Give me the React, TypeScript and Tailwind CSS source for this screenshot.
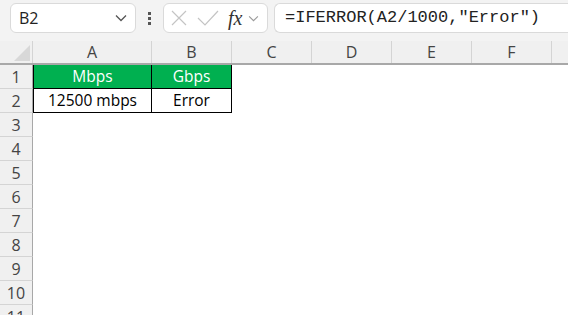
import React from "react";

const cols = [
  { name: "A", w: "w-[119px]" },
  { name: "B", w: "w-[80px]" },
  { name: "C", w: "w-[80px]" },
  { name: "D", w: "w-[80px]" },
  { name: "E", w: "w-[80px]" },
  { name: "F", w: "w-[80px]" },
  { name: "", w: "w-[80px]" },
];

const rows = [1, 2, 3, 4, 5, 6, 7, 8, 9, 10, 11];

function Chevron() {
  return (
    <svg width="12" height="8" viewBox="0 0 12 8" fill="none">
      <path d="M1 1.5 6 6.5 11 1.5" stroke="#555" strokeWidth="1.3" />
    </svg>
  );
}

export default function App() {
  return (
    <div
      className="flex h-[315px] w-[568px] flex-col overflow-hidden bg-[#f3f3f3]"
      style={{ fontFamily: "'Open Sans', 'Liberation Sans', sans-serif" }}
    >
      {/* formula bar */}
      <div className="flex h-[41px] shrink-0 items-start pt-[3px]">
        <div className="ml-[10px] flex h-[30px] w-[126px] items-center justify-between rounded-[6px] border border-[#dadada] bg-white pl-[8px] pr-[8px]">
          <span className="text-[16px] text-[#222]">B2</span>
          <Chevron />
        </div>
        <div className="flex h-[30px] w-[27px] flex-col items-center justify-center gap-[2px]">
          <span className="h-[3px] w-[3px] bg-[#555]" />
          <span className="h-[3px] w-[3px] bg-[#555]" />
          <span className="h-[3px] w-[3px] bg-[#555]" />
        </div>
        <div className="flex h-[30px] w-[105px] items-center rounded-[6px] border border-[#dadada] bg-white pl-[7px]">
          <svg width="16" height="16" viewBox="0 0 16 16" fill="none">
            <path d="M1 1 15 15M15 1 1 15" stroke="#c4c4c4" strokeWidth="1.2" />
          </svg>
          <svg className="ml-[10px]" width="22" height="16" viewBox="0 0 22 16" fill="none">
            <path d="M1 8 8 15 21 1" stroke="#c4c4c4" strokeWidth="1.2" />
          </svg>
          <span
            className="ml-[9px] text-[20px] italic leading-none text-[#333]"
            style={{ fontFamily: "'Liberation Serif', serif" }}
          >
            fx
          </span>
          <span className="ml-[6px]">
            <svg width="11" height="7" viewBox="0 0 12 8" fill="none">
              <path d="M1 1.5 6 6.5 11 1.5" stroke="#9a9a9a" strokeWidth="1.3" />
            </svg>
          </span>
        </div>
        <div className="ml-[6px] flex h-[30px] flex-1 items-center rounded-l-[6px] border border-r-0 border-[#dadada] bg-white pl-[10px]">
          <span
            className="whitespace-pre text-[17px] text-[#222]"
            style={{ fontFamily: "'Liberation Mono', monospace" }}
          >
            =IFERROR(A2/1000,"Error")
          </span>
        </div>
      </div>

      {/* column headers */}
      <div className="flex h-[24px] shrink-0 border-b-2 border-[#a8a8a8] bg-[#f0f0f0]">
        <div className="flex w-[33px] shrink-0 items-end justify-end border-r border-[#d4d4d4] p-[2px]">
          <svg width="16" height="16" viewBox="0 0 16 16">
            <path d="M16 0 16 16 0 16Z" fill="#d8d8d8" />
          </svg>
        </div>
        {cols.map((c, i) => (
          <div
            key={i}
            className={`${c.w} flex shrink-0 items-center justify-center border-r border-[#d4d4d4] text-[16px] text-[#444]`}
          >
            {c.name}
          </div>
        ))}
      </div>

      {/* rows */}
      <div className="flex flex-col">
        {rows.map((r) => (
          <div key={r} className="flex h-[24px] shrink-0">
            <div className="flex w-[33px] shrink-0 items-center justify-center border-b border-r border-[#d4d4d4] border-r-[#a8a8a8] bg-[#f0f0f0] text-[16px] text-[#444]">
              {r}
            </div>
            <div className="flex-1 bg-white">
              {r === 1 && (
                <div className="flex h-[24px]">
                  <div className="flex w-[119px] items-center justify-center border border-t-0 border-black bg-[#00b050] text-[15.5px] text-white">
                    Mbps
                  </div>
                  <div className="flex w-[80px] items-center justify-center border border-l-0 border-t-0 border-black bg-[#00b050] text-[15.5px] text-white">
                    Gbps
                  </div>
                </div>
              )}
              {r === 2 && (
                <div className="flex h-[24px]">
                  <div className="flex w-[119px] items-center justify-center border border-t-0 border-black text-[15.5px] text-black">
                    12500 mbps
                  </div>
                  <div className="flex w-[80px] items-center justify-center border border-l-0 border-t-0 border-black text-[15.5px] text-black">
                    Error
                  </div>
                </div>
              )}
            </div>
          </div>
        ))}
      </div>
    </div>
  );
}
